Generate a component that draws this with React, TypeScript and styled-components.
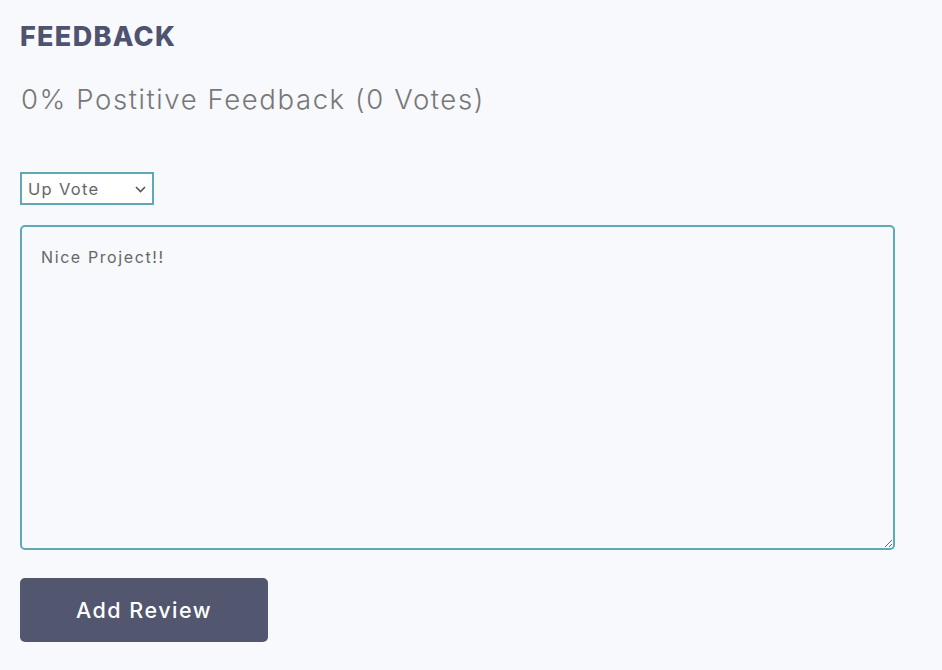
import React, { useEffect, useRef } from "react";
import styled, { createGlobalStyle } from "styled-components";

const Global = createGlobalStyle`
  html, body { margin: 0; padding: 0; background: #f8f9fd; }
  body { font-family: "Inter", "Noto Sans", sans-serif; }
  * { box-sizing: border-box; }
`;

const Page = styled.div`
  padding: 18px 20px 20px 20px;
  display: flex;
  flex-direction: column;
  width: 915px;
`;

const Title = styled.h2`
  margin: 0;
  font-family: "Inter", sans-serif;
  font-weight: 800;
  font-size: 27px;
  line-height: 38px;
  color: #4f5370;
  letter-spacing: 1.3px;
`;

const Summary = styled.p`
  margin: 25px 0 0 1px;
  font-family: "Inter", sans-serif;
  font-weight: 300;
  font-size: 27.5px;
  line-height: 36px;
  color: #777777;
  letter-spacing: 1.6px;
`;

const Form = styled.form`
  display: flex;
  flex-direction: column;
  align-items: flex-start;
  margin-top: 55px;
`;

const SelectWrap = styled.div`
  position: relative;
  width: 134px;
  height: 33px;
`;

const Select = styled.select`
  appearance: none;
  width: 100%;
  height: 100%;
  border: 2px solid #5fa8b8;
  border-radius: 0;
  background: #ffffff;
  padding: 0 0 0 6px;
  font-family: "Inter", sans-serif;
  font-size: 16.5px;
  letter-spacing: 1.3px;
  color: #666666;
  outline: none;
`;

const Chevron = styled.svg`
  position: absolute;
  right: 8px;
  top: 14px;
  pointer-events: none;
`;

const TextArea = styled.textarea`
  margin-top: 20px;
  width: 875px;
  height: 325px;
  border: 2px solid #5fa8b8;
  border-radius: 5px;
  background: #f8f9fd;
  padding: 20px 19px;
  font-family: "Inter", sans-serif;
  font-size: 16px;
  letter-spacing: 1.6px;
  color: #666666;
  caret-color: #444;
  outline: none;
  resize: both;
`;

const Button = styled.button`
  margin-top: 28px;
  width: 248px;
  height: 64px;
  border: none;
  border-radius: 5px;
  background: #52566f;
  color: #ffffff;
  font-family: "Inter", sans-serif;
  font-weight: 500;
  font-size: 21.5px;
  letter-spacing: 1.5px;
  cursor: pointer;
`;

export default function App() {
  const ref = useRef<HTMLTextAreaElement>(null);
  useEffect(() => {
    const el = ref.current;
    if (el) {
      el.focus();
      el.setSelectionRange(el.value.length, el.value.length);
    }
  }, []);
  return (
    <>
      <Global />
      <Page>
        <Title>FEEDBACK</Title>
        <Summary>0% Postitive Feedback (0 Votes)</Summary>
        <Form onSubmit={(e) => e.preventDefault()}>
          <SelectWrap>
            <Select defaultValue="up">
              <option value="up">Up Vote</option>
              <option value="down">Down Vote</option>
            </Select>
            <Chevron width="11" height="7" viewBox="0 0 11 7">
              <path d="M1 1l4.5 4.5L10 1" fill="none" stroke="#555" strokeWidth="1.6" />
            </Chevron>
          </SelectWrap>
          <TextArea ref={ref} defaultValue="Nice Project!!" />
          <Button type="submit">Add Review</Button>
        </Form>
      </Page>
    </>
  );
}
